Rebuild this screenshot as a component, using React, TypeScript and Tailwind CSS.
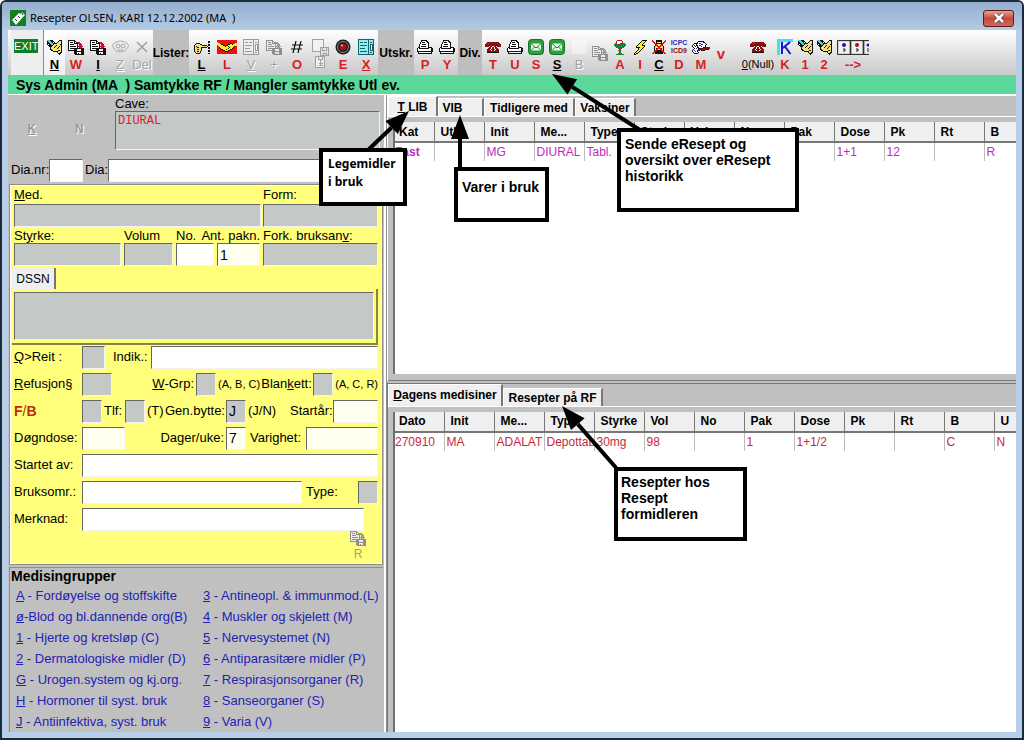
import { ReactNode } from 'react';
import clsx from 'clsx';

const palette: Record<string, string> = {
  k: '#111111',
  w: '#ffffff',
  y: '#f6e27a',
  Y: '#ffee22',
  c: '#3fd8dc',
  r: '#c8102e',
  R: '#ee1111',
  d: '#8b1010',
  g: '#0b8a3c',
  b: '#1a2fd0',
};

const grayPalette: Record<string, string> = {
  ...palette,
  k: '#8f8f8f',
  w: '#ececec',
  r: '#9b9b9b',
};

function Pixels({ rows, gray = false }: { rows: string[]; gray?: boolean }) {
  const colors = gray ? grayPalette : palette;
  const width = rows[0].length;
  return (
    <svg
      width={width}
      height={rows.length}
      viewBox={`0 0 ${width} ${rows.length}`}
      shapeRendering="crispEdges"
      className="shrink-0"
      aria-hidden="true"
    >
      {rows.map((row, y) =>
        row.split('').map((ch, x) => (ch === '.' ? null : <rect key={`${x}-${y}`} x={x} y={y} width="1" height="1" fill={colors[ch]} />))
      )}
    </svg>
  );
}

const writeRows = [
  'ccckkk......kkk',
  'kccckkk....kyyk',
  'kkccckwk..kyyyk',
  'kkkccckkkkyyyyk',
  'kwkkcckyyyyyykk',
  '.kkkkkyyykyyyyk',
  '..kkkyyykyyykyk',
  '...kyyykyyykyyk',
  '...kyyyyyykyyyk',
  '...kkyyyyyyyyyk',
  '....kkyyyyykkyk',
  '......kkkkkyyyk',
  '..........kyykk',
  '...........kkk.',
  '............k..',
];

const saveRows = [
  'kkkkkkk.........',
  'kwwwwwkk........',
  'kwkkkwkwkrrr....',
  'kwwwwwkkkkrrr...',
  'kwkkkkwwwk.rrr..',
  'kwwwwwwwwk.rrr..',
  'kwkkkkkkwkrrrrr.',
  'kwwwwwwwwk.rrr..',
  'kwkkkkkkkkkkrkkk',
  'kwwwwwkkkwwwwkkk',
  'kkkkkkkkkwwwwkkk',
  '......kkkkkkkkkk',
  '......kkkwwwwkkk',
  '......kkkwkwwkkk',
  '.......kkkkkkkkk',
];

const printerRows = [
  '....kkkkkk......',
  '....kwwwwkk.....',
  '...kwkkkwwkk....',
  '...kwwwwwwwk....',
  '..kwwkkkkwwk....',
  '..kwwwwwwwwk....',
  '..kwkkkkkwwk....',
  '.kkwwwwwwwwkkkk.',
  'kwkkkkkkkkkkwwkk',
  'kwwwwwwwwwwwwwkk',
  'kwwwwwwwwwwwwwkk',
  'kkkkkkkkkkkkkkkk',
  '.kwwwwwwwwwwwwk.',
  '.kkkkkkkkkkkkkk.',
];

const phoneRows = [
  '..dddddddddddd..',
  '.dRRRdddddddddd.',
  'dddddddddddddddd',
  'ddddkddddddkdddd',
  'dddd.dd..dd.dddd',
  '....ddwddwdd....',
  '...dddwddwddd...',
  '..dddwddddwddd..',
  '..ddddwddwdddd..',
  '..dddddddddddd..',
  '..kkkkkkkkkkkk..',
];

const pointRows = [
  '..............kk',
  '..............kk',
  '..kkkk..........',
  '.kyyyykk......kk',
  'kyyyyyyykkkkk.kk',
  'kykyyyyyyyyyyk..',
  'kyykkyykkkkkk.kk',
  'kyyyyyyk......kk',
  'kyykkyyk........',
  'kyyyyyyk......kk',
  'kyykkyk.......kk',
  '.kyyyyk.........',
  '..kkkk........kk',
];

const shakeRows = [
  'RRRRRRRRRRRRRRRRRRRR',
  'RRRRRRRRRRRRRRRRRRRR',
  'YRRRRRRRRRRRRRRRRRRR',
  'YYYRRRRRRRRRRkkRRRYY',
  'YYYYkkRRRRRkkYYkYYYY',
  'RYYYYYkkRkkYYYYYYYYY',
  'RRYYYYYYkYYkYYYYYkRR',
  'RRkYYYYYYYYYkYYYkRRR',
  'RRRkYYYYYYYkYYYkRRRR',
  'RRRRkkYYYkYYYkkRRRRR',
  'RRRRRRkkYYYkkRRRRRRR',
  'RRRRRRRRkkkRRRRRRRRR',
  'RRRRRRRRRRRRRRRRRRRR',
  'RRRRRRRRRRRRRRRRRRRR',
];

const gobletRows = [
  '...rrrrr....',
  '..rwwwwwr...',
  '..rww.wwr...',
  '.grww.rrggg.',
  'ggggrggggggg',
  'gggggggggggg',
  '.gggggggggg.',
  '..gggggggg..',
  '....grrg....',
  '.....gg.....',
  '....rgg.....',
  '.....gg.....',
  '.....gg.....',
  '....gggg....',
  '..gggggggg..',
];

const boltRows = [
  '........kkkkk',
  '.......kYYYk.',
  '......kYYYk..',
  '.....kYYYk...',
  '....kYYYk....',
  '...kYYYYkkk..',
  '..kYYYYYYYk..',
  '..kkkkYYYk...',
  '....kYYYk....',
  '....kYYk.....',
  '...kYYk......',
  '..kYYk.......',
  '.kYYk........',
  'kYkk.........',
  'kk...........',
];

const bottleRows = [
  'R...kkkkkk...R',
  'RR..kkkkkk..RR',
  '.RR.kyyyyk.RR.',
  '..RRkkkkkkRR..',
  '...RRyyyyRR...',
  '...kRRyyRRk...',
  '..kyyRRRRyyk..',
  '..kyyyRRyyyk..',
  '..kykRRRRkyk..',
  '..kyRRyyRRyk..',
  '..kRRkkkkRRk..',
  '..RRkkkkkkRR..',
  '.RRkkkkkkkkRR.',
  'RR.kkkkkkkk.RR',
];

const recipeRows = [
  '......kkkkkk......',
  '.....kwwwwwkk.....',
  '..kkkkwbbwwwwk....',
  '.kwwkwwwwbbwwwk...',
  'kwbwkkwbbwwwwk....',
  'kwwbwkwwwbwwwk....',
  '.kwwwkkwwwwkkddddd',
  '..kwbwkkkddddddddd',
  '.kwwwwkddddddkkkk.',
  'kwbwwkdd.kkkk.....',
  'kwwbwk............',
  '.kwwwwk...........',
  '..kkkk............',
];

function MailIcon() {
  return (
    <svg width="16" height="16" viewBox="0 0 16 16" className="shrink-0" aria-hidden="true">
      <rect x="0.5" y="0.5" width="15" height="15" rx="3" fill="#2d9e3d" stroke="#15722a" />
      <rect x="3" y="4.5" width="10" height="7" fill="#eafbe8" />
      <path d="M3 4.5 8 9l5-4.5M3 11.5l3.5-3.5M13 11.5 9.500 8" stroke="#1c7a2c" fill="none" />
    </svg>
  );
}

function RecordIcon() {
  return (
    <svg width="16" height="16" viewBox="0 0 16 16" aria-hidden="true">
      <circle cx="8" cy="8" r="7.500" fill="#1a1a1a" />
      <circle cx="8" cy="8" r="5.500" fill="none" stroke="#8c8c8c" />
      <circle cx="8" cy="8" r="3.500" fill="#a01414" />
      <circle cx="7" cy="6.500" r="1" fill="#f0b0b0" />
    </svg>
  );
}

function SheetIcon({ color, fill }: { color: string; fill: string }) {
  return (
    <svg width="16" height="16" viewBox="0 0 16 16" shapeRendering="crispEdges" aria-hidden="true">
      <rect x="0.5" y="0.5" width="15" height="15" fill={fill} stroke={color} />
      <path d="M10.500 1v14M2 3.500h3M6 3.500h3M2 6.500h7M2 9.500h5M2 12.500h7M12 3.500h2M12 13.500h2" stroke={color} />
      <path d="M12 5h2v6h-2z" fill="#ffffff" stroke={color} />
    </svg>
  );
}

function CopyIcon() {
  return (
    <svg width="17" height="17" viewBox="0 0 17 17" fill="none" stroke="#a0a0a0" shapeRendering="crispEdges" aria-hidden="true">
      <path d="M.5.5h11v8h-3v4h-8z" fill="#f2f2f2" />
      <path d="M8.500 8.500h8v8h-8zM10.500 8.500v3h4v-3M11.500 16.500v-2h3v2" fill="#dddddd" />
    </svg>
  );
}

function DiskIcon() {
  return (
    <svg width="10" height="12" viewBox="0 0 10 12" fill="none" stroke="#a0a0a0" shapeRendering="crispEdges" aria-hidden="true">
      <path d="M.5.5h9v11h-9z" fill="#eeeeee" />
      <path d="M3.500.5v3h4v-3M5.500 4v5M3.500 7.500h4M3.500 9.500h4" />
    </svg>
  );
}

function FaceIcon() {
  return (
    <svg width="17" height="14" viewBox="0 0 17 14" fill="none" stroke="#a5a5a5" aria-hidden="true">
      <path d="M3 3C5 .5 12 .5 14 3c3 1 3 4 1 5-1 5-12 5-13 0-2-1-2-4 1-5Z" />
      <circle cx="6" cy="6" r="2" />
      <circle cx="11" cy="6" r="2" />
      <path d="M6 10h5" />
    </svg>
  );
}

function CrossIcon() {
  return (
    <svg width="12" height="12" viewBox="0 0 12 12" stroke="#a0a0a0" strokeWidth="1.500" aria-hidden="true">
      <path d="m1 1 10 10M11 1 1 11" />
    </svg>
  );
}

function HashIcon() {
  return (
    <svg width="12" height="12" viewBox="0 0 12 12" stroke="#111111" strokeWidth="1.200" aria-hidden="true">
      <path d="M5 0 2 12M10 0 7 12M1 4h11M0 8h11" />
    </svg>
  );
}

function CardIcon() {
  return (
    <svg width="16" height="16" viewBox="0 0 16 16" fill="none" aria-hidden="true">
      <path d="M0 1.500h16M1.500 0v16" stroke="#3fe3ee" strokeWidth="3" />
      <path d="M5 3v12M13 3 6 9M8 7.500 13.500 15" stroke="#1414e0" strokeWidth="2" />
    </svg>
  );
}

function SlotsIcon() {
  return (
    <svg width="32" height="15" viewBox="0 0 32 15" className="shrink-0" aria-hidden="true">
      <path d="M32 .5H.5v14H32" fill="#d4d4d4" stroke="#333333" />
      <path d="M2 2h10v11H2zM15 2h10v11H15zM28 2h4v11h-4z" fill="#f1f1f1" />
      <path d="M13.500 0v15M26.500 0v15" stroke="#333333" strokeWidth="1.500" />
      <circle cx="7" cy="5" r="2" fill="#1414c8" />
      <circle cx="20" cy="5" r="2" fill="#a01414" />
      <circle cx="31" cy="5" r="1.500" fill="#1414c8" />
      <path d="M7 8v4M7 10h2M20 8v4M20 10h2M31 8v4" stroke="#222222" />
    </svg>
  );
}

function AppIcon() {
  return (
    <svg width="16" height="16" viewBox="0 0 16 16" aria-hidden="true">
      <rect width="16" height="16" fill="#13801f" />
      <path d="m2 10 7-7 2 1 1-2 3 3-2 2-7 8Z" fill="#ffffff" />
      <path d="m5 9 2 2M8 6l2 2M12 3l1 2" stroke="#333333" />
    </svg>
  );
}

function CodesIcon() {
  return (
    <span className="flex flex-col text-[7px] leading-[8px] font-bold">
      <span className="text-[#2a2ab0]">ICPC</span>
      <span className="text-[#8b1010]">ICD9</span>
    </span>
  );
}

type Tool = {
  name: string;
  width: string;
  icon?: ReactNode;
  text?: ReactNode;
  tone?: 'red' | 'black' | 'gray' | 'plain';
  underline?: boolean;
  heading?: boolean;
  active?: boolean;
};

const tools: Tool[] = [
  { name: 'Ny', width: 'w-[22px]', icon: <Pixels rows={writeRows} />, text: 'N', tone: 'black', underline: true, active: true },
  { name: 'Lagre W', width: 'w-[22px]', icon: <Pixels rows={saveRows} />, text: 'W' },
  { name: 'Lagre I', width: 'w-[22px]', icon: <Pixels rows={saveRows} />, text: 'I', tone: 'black', underline: true },
  { name: 'Z', width: 'w-[22px]', icon: <FaceIcon />, text: 'Z', tone: 'gray', underline: true },
  { name: 'Slett', width: 'w-[22px]', icon: <CrossIcon />, text: 'Del', tone: 'gray' },
  { name: 'Lister:', width: 'w-[36px]', heading: true },
  { name: 'Liste', width: 'w-[25px]', icon: <Pixels rows={pointRows} />, text: 'L', tone: 'black', underline: true },
  { name: 'Legeliste', width: 'w-[26px]', icon: <Pixels rows={shakeRows} />, text: 'L' },
  { name: 'Vis', width: 'w-[22px]', icon: <SheetIcon color="#9a9a9a" fill="#eeeeee" />, text: 'V', tone: 'gray', underline: true },
  { name: 'Legg til', width: 'w-[24px]', icon: <Pixels rows={saveRows} gray />, text: '+', tone: 'gray' },
  { name: 'Nummer', width: 'w-[22px]', icon: <HashIcon />, text: 'O' },
  { name: 'Kopi', width: 'w-[24px]', icon: <CopyIcon />, text: <DiskIcon />, tone: 'gray' },
  { name: 'Opptak', width: 'w-[22px]', icon: <RecordIcon />, text: 'E' },
  { name: 'Skjema', width: 'w-[24px]', icon: <SheetIcon color="#16616a" fill="#8ff0f4" />, text: 'X', underline: true },
  { name: 'Utskr.', width: 'w-[36px]', heading: true },
  { name: 'Skriv P', width: 'w-[22px]', icon: <Pixels rows={printerRows} />, text: 'P' },
  { name: 'Skriv Y', width: 'w-[22px]', icon: <Pixels rows={printerRows} />, text: 'Y' },
  { name: 'Div.', width: 'w-[24px]', heading: true },
  { name: 'Telefon', width: 'w-[22px]', icon: <Pixels rows={phoneRows} />, text: 'T' },
  { name: 'Utskrift', width: 'w-[22px]', icon: <Pixels rows={printerRows} />, text: 'U' },
  { name: 'Send', width: 'w-[20px]', icon: <MailIcon />, text: 'S' },
  { name: 'Send eResept', width: 'w-[22px]', icon: <MailIcon />, text: 'S', tone: 'black', underline: true },
  { name: 'B', width: 'w-[22px]', icon: <span className="size-[14px] bg-white/40" />, text: 'B', tone: 'gray' },
  { name: 'Lagre kopi', width: 'w-[20px]', icon: <span className="pt-3"><Pixels rows={saveRows} gray /></span> },
  { name: 'Apotek', width: 'w-[20px]', icon: <Pixels rows={gobletRows} />, text: 'A' },
  { name: 'Interaksjon', width: 'w-[20px]', icon: <Pixels rows={boltRows} />, text: 'I' },
  { name: 'Cave', width: 'w-[18px]', icon: <Pixels rows={bottleRows} />, text: 'C', tone: 'black', underline: true },
  { name: 'Diagnose', width: 'w-[22px]', icon: <CodesIcon />, text: 'D' },
  { name: 'Merknad', width: 'w-[22px]', icon: <Pixels rows={recipeRows} />, text: 'M' },
];

const tools2: Tool[] = [
  { name: 'Ring', width: 'w-[32px]', icon: <Pixels rows={phoneRows} />, text: <><u>0</u>(Null)</>, tone: 'plain' },
  { name: 'Kort', width: 'w-[22px]', icon: <CardIcon />, text: 'K' },
  { name: 'Notat 1', width: 'w-[18px]', icon: <Pixels rows={writeRows} />, text: '1' },
  { name: 'Notat 2', width: 'w-[20px]', icon: <Pixels rows={writeRows} />, text: '2' },
  { name: 'Neste', width: 'w-[38px]', icon: <SlotsIcon />, text: '-->' },
];

function ToolButton({ tool }: { tool: Tool }) {
  const { name, width, icon, text, tone = 'red', underline, heading, active } = tool;
  if (heading) {
    return (
      <span className={clsx('flex shrink-0 items-center justify-center bg-[#bebebe] text-[12px] font-bold', width)}>{name}</span>
    );
  }
  return (
    <button
      aria-label={name}
      className={clsx('flex shrink-0 flex-col items-center pt-2', width, active && 'border-l border-[#9d7f97] bg-white/70')}
    >
      <span className="flex h-[18px] items-center justify-center">{icon}</span>
      <span
        className={clsx(
          'leading-[17px] whitespace-nowrap',
          tone === 'plain' ? 'text-[11px] text-black' : 'text-[13px]',
          tone === 'red' && 'font-bold text-[#d81e24]',
          tone === 'black' && 'font-bold text-black',
          tone === 'gray' && 'text-[#a3a3a3] [text-shadow:1px_1px_0_#fff]',
          underline && 'underline'
        )}
      >
        {text}
      </span>
    </button>
  );
}

const sunken = 'min-w-0 border border-t-[#666] border-l-[#666] border-r-[#f4f4f4] border-b-[#f4f4f4] px-0.5 outline-none';

function Box({ id, className, value }: { id: string; className: string; value?: string }) {
  return <input id={id} type="text" defaultValue={value} className={clsx(sunken, 'h-[23px] shrink-0 text-[14px]', className)} />;
}

function Label({ id, className, children }: { id: string; className?: string; children: ReactNode }) {
  return (
    <label htmlFor={id} className={clsx('shrink-0 whitespace-nowrap', className)}>
      {children}
    </label>
  );
}

const gray = 'bg-[#c4c8c7]';
const cream = 'bg-[#fffff0]';

function PatientSection() {
  return (
    <section className="pb-0.5">
      <div className="flex">
        <div className="flex w-[107px] shrink-0 items-center justify-around pt-3 pr-3 text-[12px] font-bold text-[#999]">
          <button className="underline [text-shadow:1px_1px_0_#fff]">K</button>
          <button className="[text-shadow:1px_1px_0_#fff]">N</button>
        </div>
        <div className="flex flex-1 flex-col pr-1">
          <Label id="cave" className="pt-0.5 leading-[14px]">Cave:</Label>
          <textarea
            id="cave"
            defaultValue="DIURAL"
            className={clsx(sunken, gray, "h-[39px] resize-none font-['Liberation_Mono',monospace] text-[12px] leading-[18px] text-[#dd2030]")}
          />
        </div>
      </div>
      <div className="mt-2 flex h-6 items-center pr-1.5 pl-[3px]">
        <Label id="dianr" className="w-[38px]">Dia.nr:</Label>
        <Box id="dianr" className="w-[34px] bg-white" />
        <Label id="dia" className="w-[25px] pl-0.5">Dia:</Label>
        <Box id="dia" className="flex-1 bg-white" />
      </div>
    </section>
  );
}

function PrescriptionForm() {
  return (
    <section className="mx-px border border-[#8d8d8d] bg-[#ffff7b] px-1 pb-0.5 outline outline-1 -outline-offset-2 outline-white">
      <div className="flex gap-0.5">
        <div className="flex w-[247px] flex-col">
          <Label id="med" className="h-[19px] leading-[19px]"><u>M</u>ed.</Label>
          <Box id="med" className={gray} />
        </div>
        <div className="flex min-w-0 flex-1 flex-col">
          <Label id="form" className="h-[19px] leading-[19px]">Form:</Label>
          <Box id="form" className={gray} />
        </div>
      </div>
      <div className="mt-px flex gap-[3px]">
        <div className="flex w-[107px] flex-col">
          <Label id="styrke" className="h-[15px] leading-[15px]">St<u>y</u>rke:</Label>
          <Box id="styrke" className={gray} />
        </div>
        <div className="flex w-[49px] flex-col">
          <Label id="volum" className="h-[15px] leading-[15px]">Volum</Label>
          <Box id="volum" className={gray} />
        </div>
        <div className="flex w-[38px] flex-col">
          <Label id="no" className="h-[15px] leading-[15px]">No.</Label>
          <Box id="no" className="bg-white" />
        </div>
        <div className="flex w-[43px] flex-col items-end">
          <Label id="pakn" className="h-[15px] leading-[15px]">Ant. pakn.</Label>
          <Box id="pakn" className={clsx('w-full', cream)} value="1" />
        </div>
        <div className="flex min-w-0 flex-1 flex-col">
          <Label id="fork" className="h-[15px] leading-[15px]">Fork. bruksan<u>v</u>:</Label>
          <Box id="fork" className={gray} />
        </div>
      </div>

      <button className="mt-0.5 -ml-0.5 block h-[21px] w-[44px] border-r-2 border-[#777] bg-[#efefef] text-[12px]">DSSN</button>
      <div className="-ml-0.5 border-r-2 border-b-2 border-[#85854a] px-0.5 pt-[3px] pb-[3px]">
        <textarea aria-label="DSSN" className={clsx(sunken, gray, 'block h-12 w-full resize-none')} />
      </div>

      <div className="flex flex-col gap-[3px]">
        <div className="flex h-6 items-center">
          <Label id="reit" className="w-[68px]"><u>Q</u>&gt;Reit :</Label>
          <Box id="reit" className={clsx('w-[23px]', gray)} />
          <Label id="indik" className="w-[46px] pl-2">Indik.:</Label>
          <Box id="indik" className="flex-1 bg-white" />
        </div>
        <div className="flex h-6 items-center">
          <Label id="refusjon" className="w-[68px]"><u>R</u>efusjon§</Label>
          <Box id="refusjon" className={clsx('w-[30px]', gray)} />
          <Label id="wgrp" className="w-[84px] pr-0.5 text-right"><u>W</u>-Grp:</Label>
          <Box id="wgrp" className={clsx('w-[20px]', gray)} />
          <span className="w-[46px] pl-0.5 text-[11px] whitespace-nowrap">(A, B, C)</span>
          <Label id="blankett" className="w-[52px]">Blan<u>k</u>ett:</Label>
          <Box id="blankett" className={clsx('w-[20px]', gray)} />
          <span className="pl-0.5 text-[11px] whitespace-nowrap">(A, C, R)</span>
        </div>
        <div className="flex h-6 items-center">
          <Label id="fb" className="w-[68px] text-[14px] font-bold text-[#bb2a10]">F<span className="font-normal">/</span>B</Label>
          <Box id="fb" className={clsx('w-[20px]', gray)} />
          <Label id="tlf" className="w-[23px] pl-0.5">Tlf:</Label>
          <Box id="tlf" className={clsx('w-[20px]', gray)} />
          <span className="w-[20px] pl-0.5">(T)</span>
          <Label id="bytte" className="w-[61px]">Gen.bytte:</Label>
          <Box id="bytte" className={clsx('w-[20px]', gray)} value="J" />
          <span className="w-[44px] pl-0.5">(J/N)</span>
          <Label id="startaar" className="w-[43px]">Startår:</Label>
          <Box id="startaar" className={clsx('flex-1', cream)} />
        </div>
        <div className="flex h-6 items-center">
          <Label id="dogndose" className="w-[68px]">Døgndose:</Label>
          <Box id="dogndose" className={clsx('w-[43px]', cream)} />
          <Label id="dager" className="w-[101px] pr-0.5 text-right">Dager/uke:</Label>
          <Box id="dager" className={clsx('w-[20px]', cream)} value="7" />
          <Label id="varighet" className="w-[60px] pl-1">Varighet:</Label>
          <Box id="varighet" className={clsx('flex-1', cream)} />
        </div>
        <div className="flex h-6 items-center">
          <Label id="startet" className="w-[68px]">Startet av:</Label>
          <Box id="startet" className="flex-1 bg-white" />
        </div>
        <div className="flex h-6 items-center">
          <Label id="bruksomr" className="w-[68px]">Bruksomr.:</Label>
          <Box id="bruksomr" className="w-[220px] bg-white" />
          <Label id="type" className="flex-1 pl-1">Type:</Label>
          <Box id="type" className={clsx('w-[20px]', gray)} />
        </div>
        <div className="flex h-6 items-center">
          <Label id="merknad" className="w-[68px]">Merknad:</Label>
          <Box id="merknad" className="w-[282px] bg-white" />
        </div>
      </div>
      <button className="mr-3 ml-auto flex flex-col items-center text-[12px] leading-[16px] text-[#a5a56a]">
        <Pixels rows={saveRows} gray />
        R
      </button>
    </section>
  );
}

const groups = [
  ['A', ' - Fordøyelse og stoffskifte'],
  ['ø', '-Blod og bl.dannende org(B)'],
  ['1', ' - Hjerte og kretsløp (C)'],
  ['2', ' - Dermatologiske midler (D)'],
  ['G', ' - Urogen.system og kj.org.'],
  ['H', ' - Hormoner til syst. bruk'],
  ['J', ' - Antiinfektiva, syst. bruk'],
  ['3', ' - Antineopl. & immunmod.(L)'],
  ['4', ' - Muskler og skjelett (M)'],
  ['5', ' - Nervesystemet (N)'],
  ['6', ' - Antiparasitære midler (P)'],
  ['7', ' - Respirasjonsorganer (R)'],
  ['8', ' - Sanseorganer (S)'],
  ['9', ' - Varia (V)'],
];

function MedicineGroups() {
  return (
    <section className="mx-px mt-0.5 flex-1 border-t border-l border-[#8d8d8d]">
      <h2 className="pl-px text-[14px] leading-[17px] font-bold">Medisingrupper</h2>
      <ul className="grid grid-flow-col grid-cols-[187px_1fr] grid-rows-7 pl-1.5 text-[#2222b4]">
        {groups.map(([key, text]) => (
          <li key={key} className="h-[21px]">
            <button className="leading-[21px] whitespace-nowrap">
              <u>{key}</u>
              {text}
            </button>
          </li>
        ))}
      </ul>
    </section>
  );
}

type Column = { title: string; width: string };

type GridProps = {
  columns: Column[];
  row: string[];
  color: string;
};

function RecordGrid({ columns, row, color }: GridProps) {
  return (
    <div className="mt-[5px] ml-[5px] flex-1 overflow-hidden border-l-2 border-[#6f6f6f] bg-white">
      <table className="w-full table-fixed border-collapse text-left text-[12px]">
        <colgroup>
          {columns.map((col) => (
            <col key={col.title} className={col.width} />
          ))}
        </colgroup>
        <thead>
          <tr className="h-[20px] border-b-2 border-[#777] bg-[#efefef]">
            {columns.map((col) => (
              <th key={col.title} className="border-l border-[#777] pl-1.5 font-bold whitespace-nowrap first:border-l-0 first:pl-1">{col.title}</th>
            ))}
          </tr>
        </thead>
        <tbody className={color}>
          <tr className="h-[19px]">
            {row.map((cell, i) => (
              <td key={i} className="overflow-hidden border-l border-[#bbb] pl-0.5 whitespace-nowrap first:border-l-0 first:pl-0">
                {i === 0 && cell === 'Fast' ? <b>{cell}</b> : cell}
              </td>
            ))}
          </tr>
        </tbody>
      </table>
    </div>
  );
}

const currentColumns: Column[] = [
  { title: 'Kat', width: 'w-[39px]' },
  { title: 'Utl...', width: 'w-[50px]' },
  { title: 'Init', width: 'w-[50px]' },
  { title: 'Me...', width: 'w-[50px]' },
  { title: 'Type', width: 'w-[50px]' },
  { title: 'Styrke', width: 'w-[50px]' },
  { title: 'Vol', width: 'w-[50px]' },
  { title: 'No', width: 'w-[50px]' },
  { title: 'Pak', width: 'w-[50px]' },
  { title: 'Dose', width: 'w-[50px]' },
  { title: 'Pk', width: 'w-[50px]' },
  { title: 'Rt', width: 'w-[50px]' },
  { title: 'B', width: 'w-auto' },
];

const dayColumns: Column[] = [
  { title: 'Dato', width: 'w-[49px]' },
  { title: 'Init', width: 'w-[50px]' },
  { title: 'Me...', width: 'w-[50px]' },
  { title: 'Type', width: 'w-[50px]' },
  { title: 'Styrke', width: 'w-[50px]' },
  { title: 'Vol', width: 'w-[50px]' },
  { title: 'No', width: 'w-[50px]' },
  { title: 'Pak', width: 'w-[50px]' },
  { title: 'Dose', width: 'w-[50px]' },
  { title: 'Pk', width: 'w-[50px]' },
  { title: 'Rt', width: 'w-[50px]' },
  { title: 'B', width: 'w-[50px]' },
  { title: 'U', width: 'w-auto' },
];

const tab = 'border-t border-l border-t-white border-l-white border-r-2 border-r-[#777] bg-[#efefef] text-[12px] font-bold whitespace-nowrap';

function RecordPanes() {
  return (
    <div className="flex min-w-0 flex-1 flex-col border-l border-[#8d8d8d]">
      <section className="flex grow-9 basis-0 flex-col border-t border-l border-white">
        <div role="tablist" className="flex h-[21px] items-end border-b border-white">
          <button role="tab" aria-selected="true" className={clsx(tab, 'h-full w-[50px]')}><u>T</u> LIB</button>
          <button role="tab" className={clsx(tab, 'h-[18px] w-[46px] pr-4')}>VIB</button>
          <button role="tab" className={clsx(tab, 'h-[18px] w-[91px]')}>Tidligere med</button>
          <button role="tab" className={clsx(tab, 'h-[18px] w-[61px]')}>Vaksiner</button>
        </div>
        <RecordGrid
          columns={currentColumns}
          row={['Fast', '', 'MG', 'DIURAL', 'Tabl.', '', '', '', '', '1+1', '12', '', 'R']}
          color="text-[#c02ac0]"
        />
        <div className="h-[7px] border-b border-[#777]" />
      </section>
      <section className="mt-0.5 flex grow-11 basis-0 flex-col border-t border-l border-[#777]">
        <div role="tablist" className="flex h-[23px] items-end border-b border-white">
          <button role="tab" aria-selected="true" className={clsx(tab, 'h-full w-[115px]')}><u>D</u>agens medisiner</button>
          <button role="tab" className={clsx(tab, 'h-[18px] w-[100px]')}>Resepter på RF</button>
        </div>
        <RecordGrid
          columns={dayColumns}
          row={['270910', 'MA', 'ADALAT', 'Depottab', '30mg', '98', '', '1', '1+1/2', '', '', 'C', 'N']}
          color="text-[#c8283a]"
        />
      </section>
    </div>
  );
}

const arrows = [
  { from: [366, 152], to: [409, 111] },
  { from: [460, 172], to: [460, 115] },
  { from: [640, 130], to: [552, 74] },
  { from: [618, 470], to: [562, 406] },
];

function Callouts() {
  return (
    <div className="pointer-events-none absolute inset-0 font-bold text-black">
      <svg className="absolute inset-0 size-full" aria-hidden="true">
        {arrows.map(({ from, to }) => {
          const angle = Math.atan2(to[1] - from[1], to[0] - from[0]);
          const baseX = to[0] - Math.cos(angle) * 24;
          const baseY = to[1] - Math.sin(angle) * 24;
          const dx = Math.sin(angle) * 9;
          const dy = Math.cos(angle) * 9;
          return (
            <g key={to.join()}>
              <line x1={from[0]} y1={from[1]} x2={baseX} y2={baseY} stroke="#000000" strokeWidth="4" />
              <polygon points={`${to[0]},${to[1]} ${baseX - dx},${baseY + dy} ${baseX + dx},${baseY - dy}`} />
            </g>
          );
        })}
      </svg>
      <p className="absolute top-[148px] left-[319px] h-[58px] w-[88px] border-4 border-black bg-white px-[5px] py-[3px] font-['Noto_Sans','Open_Sans',sans-serif] text-[12px] leading-[18px]">
        Legemidler<br />i bruk
      </p>
      <p className="absolute top-[167px] left-[454px] h-[55px] w-[95px] border-4 border-black bg-white px-1 py-2 text-[14px] leading-[16px] whitespace-nowrap">
        Varer i bruk
      </p>
      <p className="absolute top-[128px] left-[617px] h-[84px] w-[182px] border-4 border-black bg-white px-1 py-1 text-[14px] leading-[16px] whitespace-nowrap">
        Sende eResept og<br />oversikt over eResept<br />historikk
      </p>
      <p className="absolute top-[467px] left-[614px] h-[74px] w-[133px] border-4 border-black bg-white px-[3px] py-[3px] text-[14px] leading-[16px]">
        Resepter hos<br />Resept<br />formidleren
      </p>
    </div>
  );
}

export default function App() {
  return (
    <div className="relative font-['Liberation_Sans',Arial,sans-serif] text-[13px] text-black">
      <main className="flex min-h-screen flex-col overflow-hidden rounded-t-md border-2 border-[#1b2a38] bg-[#b7cfe8] px-1.5 pb-1.5">
        <header className="-mx-1.5 flex h-7 items-center bg-linear-to-b from-[#94aecd] to-[#b5cbe5] pt-1 pr-2 pl-2">
          <AppIcon />
          <h1 className="flex-1 pl-1 font-['Noto_Sans','Open_Sans',sans-serif] text-[11px] whitespace-pre">Resepter OLSEN, KARI 12.12.2002 (MA  )</h1>
          <button
            aria-label="Lukk"
            className="flex h-[17px] w-[31px] items-center justify-center rounded-[3px] border border-[#5a1b1b] bg-linear-to-b from-[#e5a093] via-[#c8473a] to-[#d0685a]"
          >
            <svg width="12" height="10" viewBox="0 0 12 10" aria-hidden="true">
              <path d="m2 1 8 8M10 1 2 9" stroke="#444444" strokeWidth="4" />
              <path d="m2 1 8 8M10 1 2 9" stroke="#ffffff" strokeWidth="2.500" />
            </svg>
          </button>
        </header>

        <nav className="flex h-[45px] shrink-0 overflow-hidden bg-linear-to-b from-white to-[#c9c9c9] pl-[3px]">
          <button className="flex w-8 shrink-0 items-start bg-[#eeeeee] pt-[9px] pl-[3px]">
            <span className="bg-[#0f7f22] text-[11px] leading-[14px] text-white">EXIT</span>
          </button>
          {tools.map((tool) => (
            <ToolButton key={tool.name} tool={tool} />
          ))}
          <button className="mr-3 flex w-[18px] shrink-0 items-center justify-center pt-1 text-[15px] font-bold text-[#d81e24]">v</button>
          {tools2.map((tool) => (
            <ToolButton key={tool.name} tool={tool} />
          ))}
        </nav>

        <div className="h-[19px] shrink-0 bg-[#5bd99a] pl-2 text-[14px] leading-[21px] font-bold whitespace-pre">
          Sys Admin (MA  ) Samtykke RF / Mangler samtykke Utl ev.
        </div>

        <div className="flex flex-1 border-t border-white bg-[#c0c0c0]">
          <div className="flex w-[378px] shrink-0 flex-col border-r-2 border-white">
            <PatientSection />
            <PrescriptionForm />
            <MedicineGroups />
          </div>
          <RecordPanes />
        </div>
      </main>

      <Callouts />
    </div>
  );
}
